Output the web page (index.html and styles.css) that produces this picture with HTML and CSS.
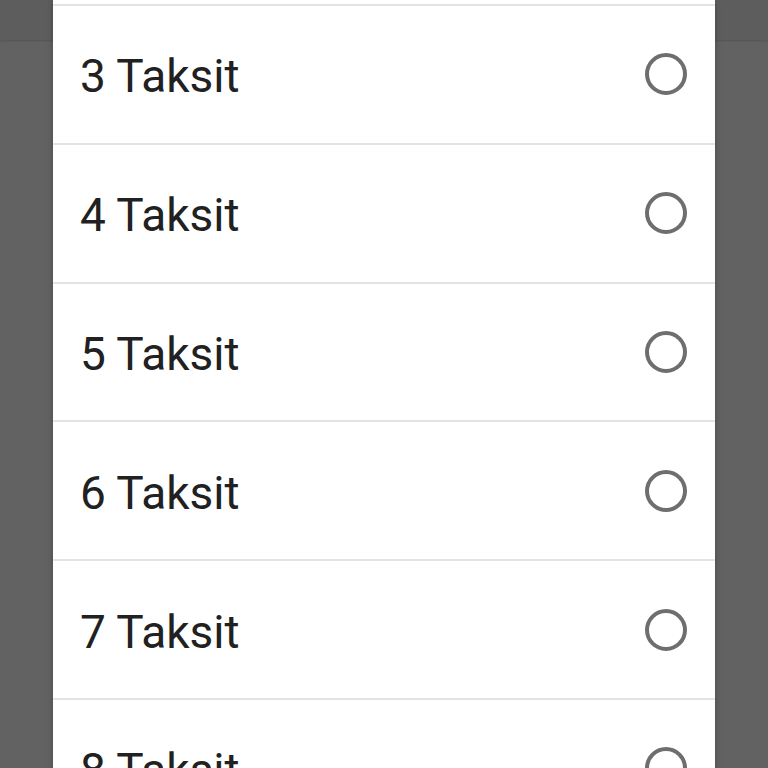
FILE: index.html
```html
<!DOCTYPE html>
<html lang="tr">
<head>
    <meta charset="UTF-8">
    <meta name="viewport" content="width=device-width, initial-scale=1.0">
    <title>Taksit seçimi</title>
    <link rel="stylesheet" href="styles.css">
</head>
<body>
    <div class="appbar"></div>

    <div class="dialog">
        <div class="row-stub"></div>
        <label class="option">
            <span class="option-text">3 Taksit</span>
            <span class="radio"></span>
        </label>
        <label class="option">
            <span class="option-text">4 Taksit</span>
            <span class="radio"></span>
        </label>
        <label class="option">
            <span class="option-text">5 Taksit</span>
            <span class="radio"></span>
        </label>
        <label class="option">
            <span class="option-text">6 Taksit</span>
            <span class="radio"></span>
        </label>
        <label class="option">
            <span class="option-text">7 Taksit</span>
            <span class="radio"></span>
        </label>
        <label class="option">
            <span class="option-text">8 Taksit</span>
            <span class="radio"></span>
        </label>
    </div>
</body>
</html>
```

FILE: styles.css
```css
html, body {
    height: 100%;
}

body {
    font-family: 'Roboto', 'Liberation Sans', sans-serif;
    background-color: #626262;
    margin: 0;
    overflow: hidden;
    position: relative;
}

.appbar {
    height: 40px;
    background-color: #5d5d5d;
    box-shadow: 0 1px 2px rgba(0, 0, 0, 0.15);
}

.dialog {
    position: absolute;
    top: 0;
    left: 53px;
    width: 662px;
    background-color: #fff;
    box-shadow: 0 0 6px rgba(0, 0, 0, 0.25);
}

.row-stub {
    height: 4px;
    border-bottom: 2px solid #e3e3e3;
}

.option {
    display: flex;
    align-items: center;
    justify-content: space-between;
    box-sizing: border-box;
    height: 138.8px;
    padding: 4px 28px 0 27px;
    border-bottom: 2px solid #e3e3e3;
    cursor: pointer;
}

.option-text {
    font-size: 46px;
    color: #212121;
}

.radio {
    width: 42px;
    height: 42px;
    margin-bottom: 4px;
    box-sizing: border-box;
    border: 4px solid #6e6e6e;
    border-radius: 50%;
}
```
